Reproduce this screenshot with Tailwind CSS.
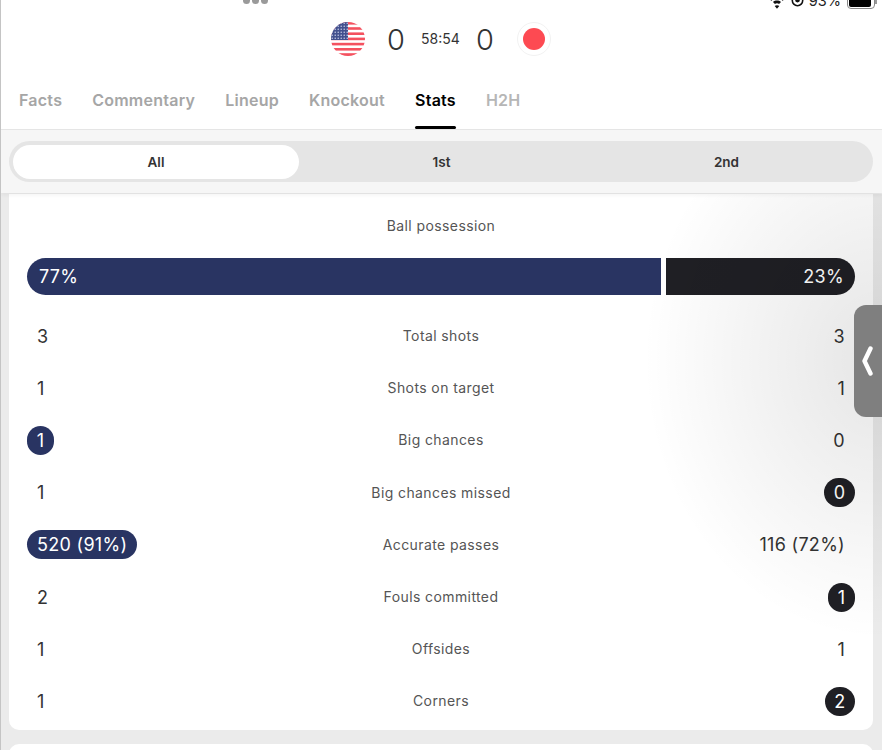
<!DOCTYPE html>
<html lang="en">
<head>
    <meta charset="UTF-8">
    <meta name="viewport" content="width=device-width, initial-scale=1.0">
    <title>Match stats</title>
    <script src="https://cdn.jsdelivr.net/npm/@tailwindcss/browser@4"></script>
</head>
<body class="bg-[#ebebeb] font-['Inter','Liberation_Sans',sans-serif] text-[#333333]">
    <div class="relative w-[882px] h-[750px] overflow-hidden border-l border-[#c4c4c4]">
        <!-- header -->
        <div class="bg-white h-[130px] border-b border-[#e6e6e6]">
            <!-- status bar, cut off by the top of the shot -->
            <div class="h-[20px] relative">
                <div class="absolute left-[242px] top-[-3px] flex gap-[2px]">
                    <span class="w-[7px] h-[7px] rounded-full bg-[#9a9a9a]"></span>
                    <span class="w-[7px] h-[7px] rounded-full bg-[#9a9a9a]"></span>
                    <span class="w-[7px] h-[7px] rounded-full bg-[#9a9a9a]"></span>
                </div>
                <div class="absolute right-[5px] top-[-8px] h-[17px] flex items-center text-[14.5px] text-[#222222]">
                    <svg class="w-[16px] h-[14px] mr-[6px] mt-[3px]" viewBox="0 0 14 12"><path d="M0 3 C4 -1 10 -1 14 3 L12 5 C9 2 5 2 2 5Z M3.5 6 C5.5 4.3 8.5 4.3 10.5 6 L8.8 7.8 C7.8 7 6.2 7 5.2 7.8Z M7 12 L5 9.4 C6 8.6 8 8.6 9 9.4Z" fill="#111111"/></svg>
                    <svg class="w-[13px] h-[13px] mr-[5px]" viewBox="0 0 13 13"><circle cx="6.5" cy="6.5" r="5.2" fill="none" stroke="#111111" stroke-width="1.6"/><circle cx="6.5" cy="6" r="2.4" fill="#111111"/></svg>
                    <span class="mr-[6px]">93%</span>
                    <span class="block w-[28px] h-[17px] p-[1px] rounded-[4px] border border-[#888888]"><span class="block w-[90%] h-full rounded-[2px] bg-black"></span></span>
                    <span class="block w-[2px] h-[6px] bg-[#999999]"></span>
                </div>
            </div>
            <!-- score -->
            <div class="h-[36px] mt-[1px] flex items-center pl-[330px]">
                <svg class="w-[34px] h-[34px] shrink-0" viewBox="0 0 34 34">
                    <defs>
                        <clipPath id="flagClip"><circle cx="17" cy="17" r="17"/></clipPath>
                        <pattern id="stars" width="3" height="3" patternUnits="userSpaceOnUse"><circle cx="1.2" cy="1.2" r="0.7" fill="#d5daf0"/></pattern>
                    </defs>
                    <g clip-path="url(#flagClip)">
                        <rect width="34" height="34" fill="#ffffff"/>
                        <rect y="0" width="34" height="2.6" fill="#f4515f"/>
                        <rect y="5.2" width="34" height="2.6" fill="#f4515f"/>
                        <rect y="10.4" width="34" height="2.6" fill="#f4515f"/>
                        <rect y="15.6" width="34" height="2.6" fill="#f4515f"/>
                        <rect y="20.8" width="34" height="2.6" fill="#f4515f"/>
                        <rect y="26" width="34" height="2.6" fill="#f4515f"/>
                        <rect y="31.2" width="34" height="2.8" fill="#f4515f"/>
                        <rect width="17" height="18" fill="#43518f"/>
                        <rect width="17" height="18" fill="url(#stars)"/>
                    </g>
                </svg>
                <span class="w-[30px] ml-[16px] text-center text-[29px] font-light leading-none">0</span>
                <span class="w-[59px] text-center text-[14px] leading-none">58:54</span>
                <span class="w-[30px] text-center text-[29px] font-light leading-none">0</span>
                <span class="ml-[17px] w-[34px] h-[34px] rounded-full border border-[#f2f2f2] flex items-center justify-center">
                    <span class="block w-[22px] h-[22px] rounded-full bg-[#fd4a52]"></span>
                </span>
            </div>
            <!-- tabs -->
            <div class="mt-[17px] pl-[18px] flex gap-[30px] text-[16px] font-semibold tracking-[0.25px] text-[#a6a6a6]">
                <span class="h-[55px] pt-[14px]">Facts</span>
                <span class="h-[55px] pt-[14px]">Commentary</span>
                <span class="h-[55px] pt-[14px]">Lineup</span>
                <span class="h-[55px] pt-[14px]">Knockout</span>
                <span class="h-[55px] pt-[14px] text-black relative">Stats<span class="absolute left-0 right-0 bottom-0 h-[3px] rounded-full bg-black"></span></span>
                <span class="h-[55px] pt-[14px] text-[#b6b6b6]">H2H</span>
            </div>
        </div>
        <!-- period switch -->
        <div class="bg-[#f6f6f6] h-[63px] pt-[11px] pl-[8px] pr-[9px] shadow-[0_2px_4px_rgba(0,0,0,0.05)] relative">
            <div class="h-[41px] rounded-full bg-[#e5e5e5] p-[4px] flex items-center text-[13.5px] font-semibold">
                <div class="w-[286px] h-[34px] pt-[1px] rounded-full bg-white flex items-center justify-center">All</div>
                <div class="flex-1 pt-[1px] text-center">1st</div>
                <div class="flex-1 pt-[1px] text-center">2nd</div>
            </div>
        </div>
        <!-- stats card -->
        <div class="mt-[1px] ml-[8px] w-[864px] h-[536px] rounded-b-[10px] bg-white px-[18px]">
            <div class="h-[64px] pt-[23px] text-center text-[14px] tracking-[0.4px] leading-[17px] text-[#555555]">Ball possession</div>
            <div class="h-[37px] flex gap-[5px] text-[18px] tracking-[0.3px] text-white">
                <div class="w-[634px] rounded-l-full bg-[#293462] flex items-center pl-[12px]">77%</div>
                <div class="flex-1 rounded-r-full bg-[#1f1f24] flex items-center justify-end pr-[11px]">23%</div>
            </div>
            <div class="mt-[15px] text-[18px] tracking-[0.3px]">
                <div class="h-[52.2px] grid grid-cols-[1fr_auto_1fr] items-center">
                    <div><span class="inline-block px-[10px]">3</span></div>
                    <div class="pb-[1px] text-[14px] tracking-[0.4px] text-[#555555]">Total shots</div>
                    <div class="text-right"><span class="inline-block px-[10px]">3</span></div>
                </div>
                <div class="h-[52.2px] grid grid-cols-[1fr_auto_1fr] items-center">
                    <div><span class="inline-block px-[10px]">1</span></div>
                    <div class="pb-[1px] text-[14px] tracking-[0.4px] text-[#555555]">Shots on target</div>
                    <div class="text-right"><span class="inline-block px-[10px]">1</span></div>
                </div>
                <div class="h-[52.2px] grid grid-cols-[1fr_auto_1fr] items-center">
                    <div><span class="inline-block min-w-[27px] h-[29px] leading-[29px] text-center rounded-full bg-[#293462] text-white">1</span></div>
                    <div class="pb-[1px] text-[14px] tracking-[0.4px] text-[#555555]">Big chances</div>
                    <div class="text-right"><span class="inline-block px-[10px]">0</span></div>
                </div>
                <div class="h-[52.2px] grid grid-cols-[1fr_auto_1fr] items-center">
                    <div><span class="inline-block px-[10px]">1</span></div>
                    <div class="pb-[1px] text-[14px] tracking-[0.4px] text-[#555555]">Big chances missed</div>
                    <div class="text-right"><span class="inline-block min-w-[31px] h-[29px] leading-[29px] text-center rounded-full bg-[#1f1f24] text-white">0</span></div>
                </div>
                <div class="h-[52.2px] grid grid-cols-[1fr_auto_1fr] items-center">
                    <div><span class="inline-block px-[10px] h-[29px] leading-[29px] rounded-full bg-[#293462] text-white">520 (91%)</span></div>
                    <div class="pb-[1px] text-[14px] tracking-[0.4px] text-[#555555]">Accurate passes</div>
                    <div class="text-right"><span class="inline-block px-[10px]">116 (72%)</span></div>
                </div>
                <div class="h-[52.2px] grid grid-cols-[1fr_auto_1fr] items-center">
                    <div><span class="inline-block px-[10px]">2</span></div>
                    <div class="pb-[1px] text-[14px] tracking-[0.4px] text-[#555555]">Fouls committed</div>
                    <div class="text-right"><span class="inline-block min-w-[27px] h-[29px] leading-[29px] text-center rounded-full bg-[#1f1f24] text-white">1</span></div>
                </div>
                <div class="h-[52.2px] grid grid-cols-[1fr_auto_1fr] items-center">
                    <div><span class="inline-block px-[10px]">1</span></div>
                    <div class="pb-[1px] text-[14px] tracking-[0.4px] text-[#555555]">Offsides</div>
                    <div class="text-right"><span class="inline-block px-[10px]">1</span></div>
                </div>
                <div class="h-[52.2px] grid grid-cols-[1fr_auto_1fr] items-center">
                    <div><span class="inline-block px-[10px]">1</span></div>
                    <div class="pb-[1px] text-[14px] tracking-[0.4px] text-[#555555]">Corners</div>
                    <div class="text-right"><span class="inline-block min-w-[30px] h-[29px] leading-[29px] text-center rounded-full bg-[#1f1f24] text-white">2</span></div>
                </div>
            </div>
        </div>
        <!-- next card -->
        <div class="mt-[14px] ml-[8px] w-[864px] h-[40px] rounded-t-[10px] bg-white"></div>
        <!-- shade around the side handle -->
        <div class="absolute left-[600px] top-[194px] w-[282px] h-[460px] pointer-events-none bg-[radial-gradient(ellipse_240px_280px_at_100%_166px,rgba(0,0,0,0.1),rgba(0,0,0,0))]"></div>
        <!-- side handle -->
        <div class="absolute left-[853px] top-[305px] w-[29px] h-[112px] rounded-l-[12px] bg-[#7f7f7f] flex items-center pl-[8px]">
            <svg class="w-[11px] h-[30px]" viewBox="0 0 11 30"><path d="M8.5 2.5 L2.5 15 L8.5 27.5" fill="none" stroke="#ffffff" stroke-width="4.4" stroke-linecap="round" stroke-linejoin="round"/></svg>
        </div>
    </div>
</body>
</html>
